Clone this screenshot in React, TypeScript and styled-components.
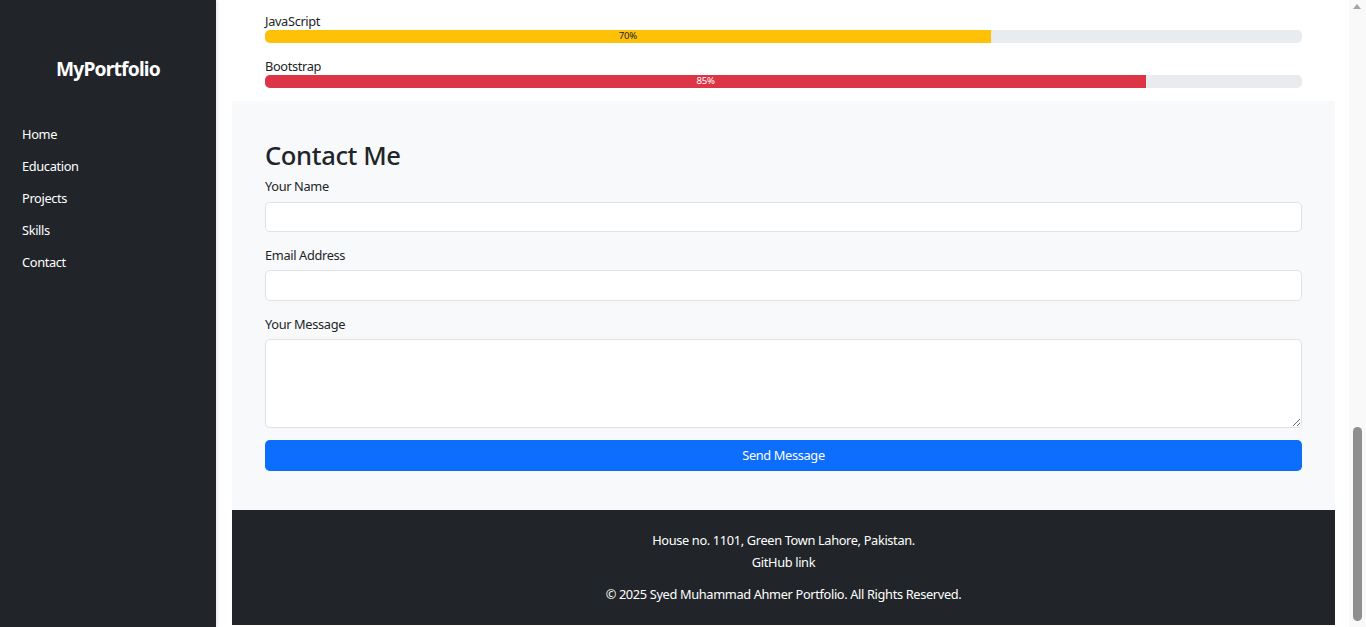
import styled, { createGlobalStyle } from "styled-components";

const GlobalStyle = createGlobalStyle`
  html, body {
    margin: 0;
    padding: 0;
    overflow: hidden;
    background: #fff;
  }
  body {
    font-family: "Segoe UI", "Noto Sans", "Liberation Sans", sans-serif;
    font-size: 12.8px;
    line-height: 1.5;
    letter-spacing: -0.35px;
    color: #212529;
  }
  * {
    box-sizing: border-box;
  }
`;

interface ISkill {
  name: string;
  level: number;
  color: string;
  dark?: boolean;
}

const skills: ISkill[] = [
  { name: "JavaScript", level: 70, color: "#ffc107", dark: true },
  { name: "Bootstrap", level: 85, color: "#dc3545" },
];

const navItems = ["Home", "Education", "Projects", "Skills", "Contact"];

export default function App() {
  return (
    <Page>
      <GlobalStyle />
      <Sidebar>
        <Brand>MyPortfolio</Brand>
        <Nav>
          {navItems.map((item) => (
            <NavLink key={item} href={"#" + item.toLowerCase()}>
              {item}
            </NavLink>
          ))}
        </Nav>
      </Sidebar>

      <Main>
        <Skills>
          {skills.map((s) => (
            <SkillItem key={s.name}>
              <SkillName>{s.name}</SkillName>
              <Progress>
                <ProgressFill
                  $color={s.color}
                  $dark={s.dark}
                  style={{ width: s.level + "%" }}
                >
                  {s.level}%
                </ProgressFill>
              </Progress>
            </SkillItem>
          ))}
        </Skills>

        <Contact>
          <Title>Contact Me</Title>
          <Field>
            <Label htmlFor="name">Your Name</Label>
            <Input id="name" type="text" />
          </Field>
          <Field>
            <Label htmlFor="email">Email Address</Label>
            <Input id="email" type="email" />
          </Field>
          <Field>
            <Label htmlFor="msg">Your Message</Label>
            <TextArea id="msg" rows={4} />
          </Field>
          <SendButton type="button">Send Message</SendButton>
        </Contact>

        <Footer>
          <FooterLine>House no. 1101, Green Town Lahore, Pakistan.</FooterLine>
          <FooterLink href="#">GitHub link</FooterLink>
          <Copyright>
            © 2025 Syed Muhammad Ahmer Portfolio. All Rights Reserved.
          </Copyright>
        </Footer>
      </Main>

      <ScrollTrack>
        <ArrowUp />
        <Thumb />
      </ScrollTrack>
    </Page>
  );
}

const Page = styled.div`
  display: flex;
  width: 100%;
  height: 100vh;
  overflow: hidden;
`;

const Sidebar = styled.aside`
  flex: 0 0 216px;
  display: flex;
  flex-direction: column;
  background-color: #212529;
  box-shadow: 1px 0 4px rgba(0, 0, 0, 0.12);
  position: relative;
  z-index: 1;
`;

const Brand = styled.div`
  margin-top: 57px;
  text-align: center;
  color: #fff;
  font-size: 19.2px;
  font-weight: 700;
  line-height: 1.2;
  letter-spacing: -0.8px;
`;

const Nav = styled.nav`
  display: flex;
  flex-direction: column;
  margin-top: 39px;
`;

const NavLink = styled.a`
  padding: 6.4px 12px 6.4px 22px;
  color: #fff;
  text-decoration: none;
  line-height: 19.2px;
`;

const Main = styled.main`
  flex: 1;
  display: flex;
  flex-direction: column;
  padding: 0 14px 0 16px;
  min-width: 0;
`;

const Skills = styled.div`
  padding: 11px 33px 0;
`;

const SkillItem = styled.div`
  margin-bottom: 12.8px;
`;

const SkillName = styled.div`
  padding-top: 1px;
  line-height: 18.2px;
`;

const Progress = styled.div`
  display: flex;
  height: 12.8px;
  background-color: #e9ecef;
  border-radius: 5px;
  overflow: hidden;
`;

const ProgressFill = styled.div<{ $color: string; $dark?: boolean }>`
  background-color: ${(p) => p.$color};
  color: ${(p) => (p.$dark ? "#212529" : "#fff")};
  font-size: 9.6px;
  line-height: 12.8px;
  letter-spacing: -0.2px;
  text-align: center;
  white-space: nowrap;
`;

const Contact = styled.section`
  background-color: #f8f9fa;
  padding: 38.4px 33px 39.4px;
`;

const Title = styled.h2`
  margin: 2px 0 4.4px;
  font-size: 25.6px;
  font-weight: 500;
  line-height: 1.2;
  letter-spacing: -0.4px;
`;

const Field = styled.div`
  margin-bottom: 12.8px;
`;

const Label = styled.label`
  display: block;
  padding-top: 1px;
  margin-bottom: 6.4px;
  line-height: 18.2px;
`;

const Input = styled.input`
  display: block;
  width: 100%;
  height: 30.4px;
  padding: 4.8px 9.6px;
  border: 1px solid #dee2e6;
  border-radius: 4.8px;
  background: #fff;
  font: inherit;
`;

const TextArea = styled.textarea`
  display: block;
  width: 100%;
  height: 88.4px;
  padding: 4.8px 9.6px;
  border: 1px solid #dee2e6;
  border-radius: 4.8px;
  background: #fff;
  font: inherit;
  resize: vertical;
`;

const SendButton = styled.button`
  display: block;
  width: 100%;
  height: 30.4px;
  border: none;
  border-radius: 4.8px;
  background-color: #0d6efd;
  color: #fff;
  font: inherit;
  letter-spacing: -0.35px;
  cursor: pointer;
`;

const Footer = styled.footer`
  display: flex;
  flex-direction: column;
  align-items: center;
  height: 115px;
  padding-top: 20.4px;
  background-color: #212529;
  color: #fff;
  line-height: 19.2px;
`;

const FooterLine = styled.p`
  margin: 0 0 3.2px;
`;

const FooterLink = styled.a`
  color: #fff;
  text-decoration: none;
`;

const Copyright = styled.p`
  margin: 12.8px 0 0;
`;

const ScrollTrack = styled.div`
  flex: 0 0 17px;
  position: relative;
  background-color: #f9f9f9;
`;

const ArrowUp = styled.div`
  position: absolute;
  top: 4px;
  left: 4px;
  width: 0;
  height: 0;
  border-left: 4.5px solid transparent;
  border-right: 4.5px solid transparent;
  border-bottom: 5px solid #a3a3a3;
`;

const Thumb = styled.div`
  position: absolute;
  top: 427px;
  left: 4px;
  width: 9px;
  height: 194px;
  border-radius: 5px;
  background-color: #8f8f8f;
`;
